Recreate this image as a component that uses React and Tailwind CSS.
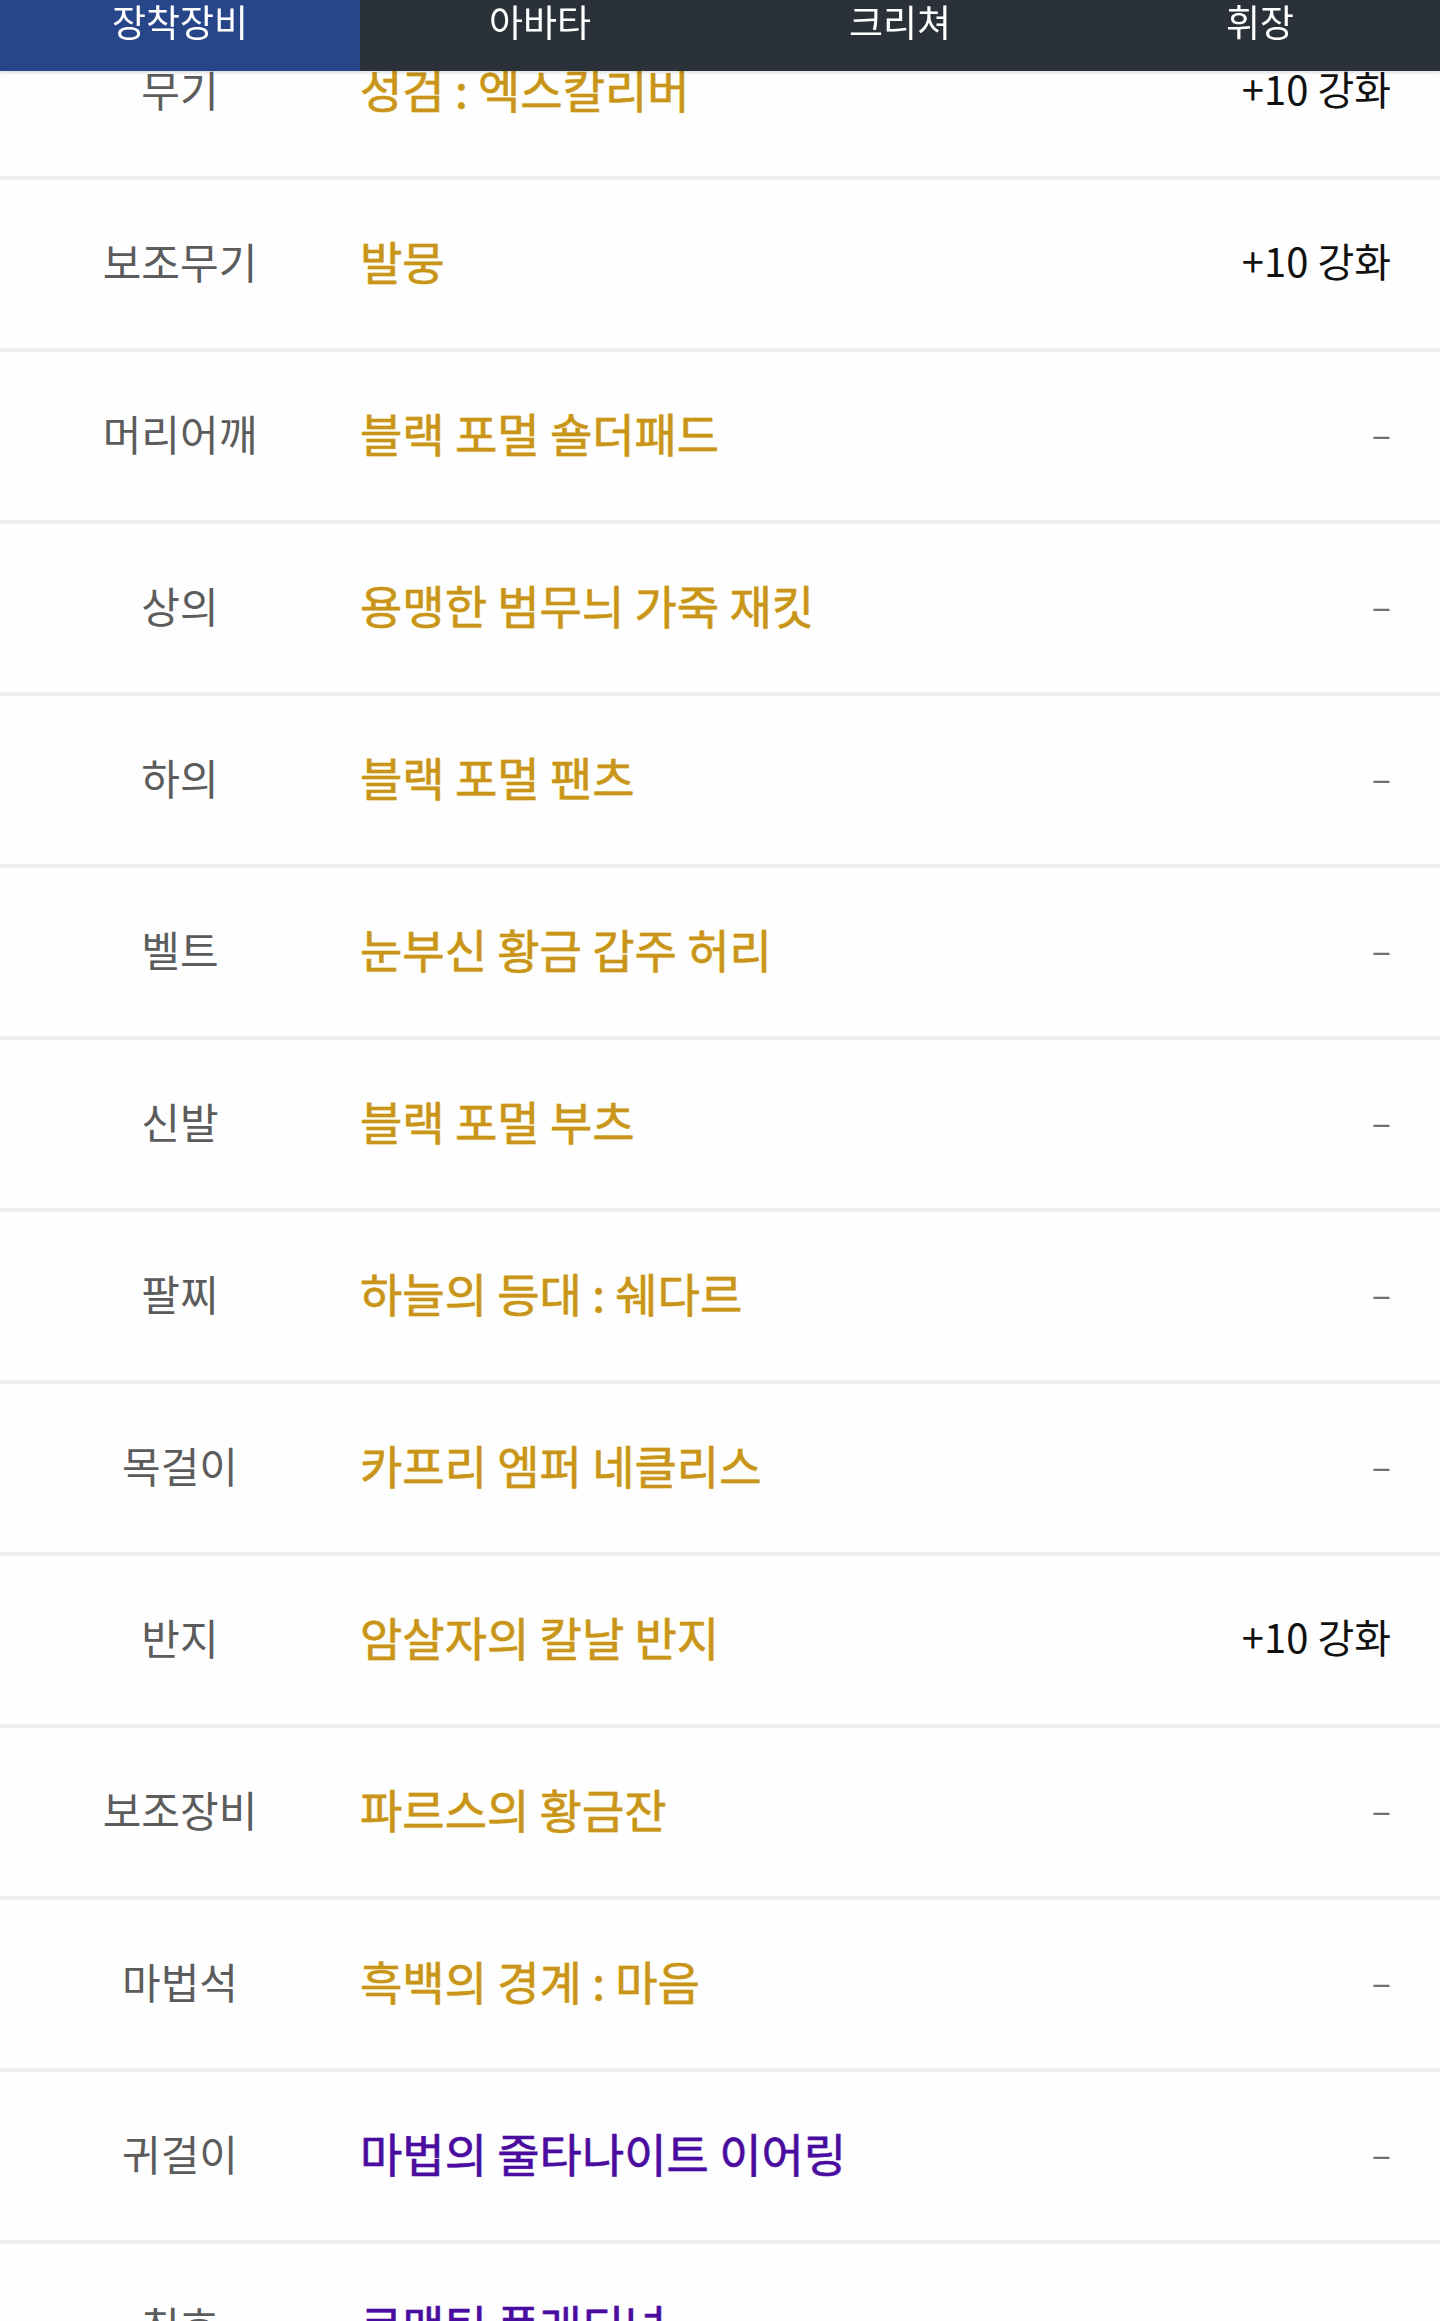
import React from "react";

const tabs = ["장착장비", "아바타", "크리쳐", "휘장"];

const items = [
  { slot: "무기", name: "성검 : 엑스칼리버", extra: "+10 강화" },
  { slot: "보조무기", name: "발뭉", extra: "+10 강화" },
  { slot: "머리어깨", name: "블랙 포멀 숄더패드" },
  { slot: "상의", name: "용맹한 범무늬 가죽 재킷" },
  { slot: "하의", name: "블랙 포멀 팬츠" },
  { slot: "벨트", name: "눈부신 황금 갑주 허리" },
  { slot: "신발", name: "블랙 포멀 부츠" },
  { slot: "팔찌", name: "하늘의 등대 : 쉐다르" },
  { slot: "목걸이", name: "카프리 엠퍼 네클리스" },
  { slot: "반지", name: "암살자의 칼날 반지", extra: "+10 강화" },
  { slot: "보조장비", name: "파르스의 황금잔" },
  { slot: "마법석", name: "흑백의 경계 : 마음" },
  { slot: "귀걸이", name: "마법의 줄타나이트 이어링", rare: true },
  { slot: "칭호", name: "로맨틱 플래티넘", rare: true },
];

function ItemRow({ item }) {
  return (
    <div className="flex items-center h-[172px] pb-2 border-b-4 border-[#efefef] bg-[#fefefe]">
      <div className="w-[360px] shrink-0 text-center text-[42px] text-[#5c5c5c]">
        {item.slot}
      </div>
      <div
        className={`flex-1 text-[46px] ${
          item.rare
            ? "text-[#4a0c9e] [-webkit-text-stroke:0.6px_#4a0c9e] [text-shadow:0_0_2px_#e9dcff]"
            : "text-[#c8951a] [-webkit-text-stroke:0.6px_#c8951a] [text-shadow:0_0_2px_#fff0a8]"
        }`}
      >
        {item.name}
      </div>
      <div className="pr-[49px] text-right">
        {item.extra ? (
          <span className="text-[40px] text-[#111]">{item.extra}</span>
        ) : (
          <span className="text-[36px] text-[#707070]">–</span>
        )}
      </div>
    </div>
  );
}

export default function App() {
  return (
    <div
      className="relative min-h-screen bg-[#fefefe]"
      style={{ fontFamily: '"Noto Sans CJK KR", "Noto Sans", sans-serif' }}
    >
      {/* Tab bar stays over the list */}
      <div className="fixed top-0 left-0 right-0 z-10 grid grid-cols-4 h-[71px] bg-[#2a3139] shadow-[0_2px_3px_rgba(0,0,0,0.12)]">
        {tabs.map((t, i) => (
          <div
            key={t}
            className={`flex justify-center pt-[1px] text-[37px] leading-[40px] text-white ${
              i === 0 ? "bg-[#27468a]" : ""
            }`}
          >
            {t}
          </div>
        ))}
      </div>

      <div className="pt-2">
        {items.map((item) => (
          <ItemRow key={item.slot} item={item} />
        ))}
      </div>
    </div>
  );
}
